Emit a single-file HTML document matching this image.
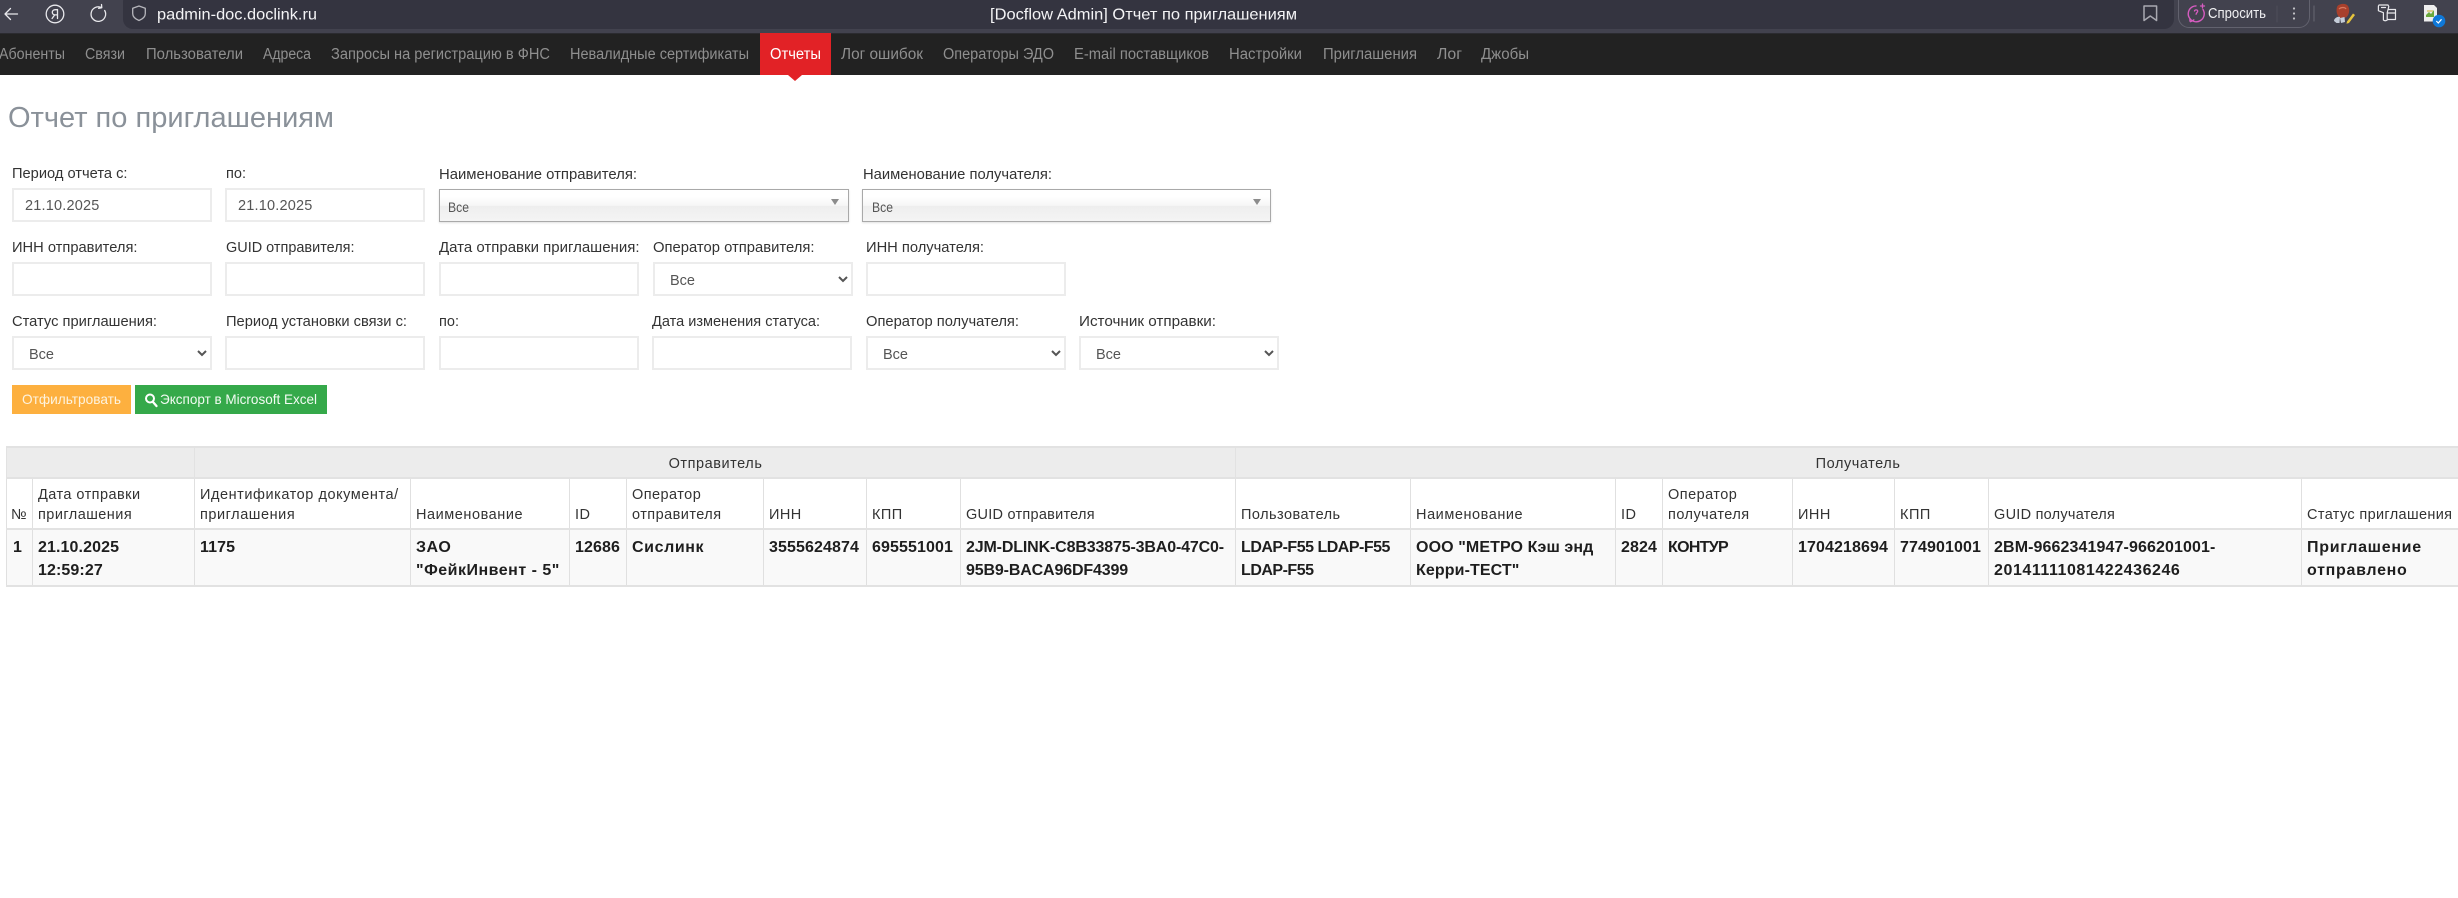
<!DOCTYPE html>
<html lang="ru">
<head>
<meta charset="utf-8">
<title>[Docflow Admin] Отчет по приглашениям</title>
<style>
html,body{margin:0;padding:0;width:2458px;height:898px;overflow:hidden;background:#fff}
body{position:relative;font-family:"Liberation Sans","DejaVu Sans",sans-serif;color:#333}
.abs{position:absolute}
#bar{left:0;top:0;width:2458px;height:33px;background:#42424e}
#omni{left:123px;top:-8px;width:2051px;height:37px;background:#343440;border-radius:10px}
#nav{left:0;top:33px;width:2458px;height:42px;background:#222;border-top:1px solid #2b2b30;box-sizing:border-box}
#active{left:760px;top:33px;width:71px;height:42px;background:#e22226}
#caret{left:788px;top:75px;width:0;height:0;border-left:7px solid transparent;border-right:7px solid transparent;border-top:6px solid #e22226}
#pill{left:2178px;top:-10px;width:132px;height:38px;box-sizing:border-box;border:1px solid #62626e;border-radius:11px}
input,select{position:absolute;box-sizing:border-box;width:200px;height:34px;background:#fff;border:2px solid #ececec;border-radius:0;margin:0;outline:0;font-family:"Liberation Sans",sans-serif;font-size:14.5px;color:#555;letter-spacing:.2px}
input{padding:1px 0 0 11px}
select{padding:3px 0 0 11px;letter-spacing:0}
.chosen{position:absolute;box-sizing:border-box;top:189px;height:33px;border:1.5px solid #a9a9a9;background:linear-gradient(#fff 20%,#f6f6f6 50%,#eee 52%,#f4f4f4 100%);box-shadow:0 1px 2px rgba(0,0,0,.12)}
.chosen:after{content:"";position:absolute;right:9px;top:9px;border-left:4px solid transparent;border-right:4px solid transparent;border-top:6px solid #8c8c8c}
.btn{position:absolute;top:385px;height:29px}
#tbl{left:6px;top:446px;width:2473px;border-collapse:collapse;table-layout:fixed;font-size:14.5px;color:#333}
#tbl th,#tbl td{border:1px solid #e0e0e0;padding:0 4px 0 5px;text-align:left;vertical-align:bottom;box-sizing:border-box;overflow:visible;white-space:nowrap}
#tbl .h1 th{height:31px;background:#ececec;border-width:2px 1px 2px 1px;border-color:#e2e2e2;text-align:center;vertical-align:middle;font-weight:400;letter-spacing:.55px;padding-top:3px}
#tbl .h2 th{height:51px;font-weight:400;line-height:20px;padding-bottom:3px;letter-spacing:.45px;border-bottom-width:2px;border-bottom-color:#e2e2e2}
#tbl td{height:57px;vertical-align:top;background:#f9f9f9;font-size:16px;font-weight:700;line-height:22.7px;padding-top:7px;color:#1e1e1e;letter-spacing:.1px;border-bottom:2px solid #e2e2e2}
svg{position:absolute;left:0;top:0;pointer-events:none}
</style>
</head>
<body>
<div class="abs" id="bar"></div>
<div class="abs" id="omni"></div>
<div class="abs" id="pill"></div>
<div class="abs" id="nav"></div>
<div class="abs" id="active"></div>
<div class="abs" id="caret"></div>

<input style="left:12px;top:188px" value="21.10.2025">
<input style="left:225px;top:188px" value="21.10.2025">
<div class="chosen" style="left:439px;width:410px"></div>
<div class="chosen" style="left:862px;width:409px"></div>

<input style="left:12px;top:262px">
<input style="left:225px;top:262px">
<input style="left:439px;top:262px">
<select style="left:653px;top:262px"><option>Все</option></select>
<input style="left:866px;top:262px">

<select style="left:12px;top:336px"><option>Все</option></select>
<input style="left:225px;top:336px">
<input style="left:439px;top:336px">
<input style="left:652px;top:336px">
<select style="left:866px;top:336px"><option>Все</option></select>
<select style="left:1079px;top:336px"><option>Все</option></select>

<div class="btn" style="left:12px;width:119px;background:#fdb03f"></div>
<div class="btn" style="left:135px;width:192px;background:#35a94a"></div>

<table class="abs" id="tbl">
<colgroup>
<col style="width:26px"><col style="width:162px"><col style="width:216px"><col style="width:159px"><col style="width:57px"><col style="width:137px"><col style="width:103px"><col style="width:94px"><col style="width:275px"><col style="width:175px"><col style="width:205px"><col style="width:47px"><col style="width:130px"><col style="width:102px"><col style="width:94px"><col style="width:313px"><col style="width:178px">
</colgroup>
<tr class="h1"><th colspan="2"></th><th colspan="7">Отправитель</th><th colspan="8">Получатель</th></tr>
<tr class="h2"><th style="padding-left:4px;padding-right:0;letter-spacing:-.6px">№</th><th>Дата отправки<br>приглашения</th><th style="padding-right:0;letter-spacing:.55px">Идентификатор документа/<br>приглашения</th><th style="letter-spacing:.55px">Наименование</th><th>ID</th><th>Оператор<br>отправителя</th><th>ИНН</th><th>КПП</th><th style="letter-spacing:.25px">GUID отправителя</th><th>Пользователь</th><th style="letter-spacing:.55px">Наименование</th><th>ID</th><th>Оператор<br>получателя</th><th>ИНН</th><th>КПП</th><th style="letter-spacing:.25px">GUID получателя</th><th style="letter-spacing:.35px">Статус приглашения</th></tr>
<tr><td style="padding-left:6px">1</td><td>21.10.2025<br>12:59:27</td><td>1175</td><td style="letter-spacing:.5px">ЗАО<br>"ФейкИнвент - 5"</td><td style="padding-right:0">12686</td><td style="letter-spacing:.6px">Сислинк</td><td style="padding-right:0">3555624874</td><td style="padding-right:0">695551001</td><td style="letter-spacing:-.15px">2JM-DLINK-C8B33875-3BA0-47C0-<br>95B9-BACA96DF4399</td><td style="letter-spacing:-.5px">LDAP-F55 LDAP-F55<br>LDAP-F55</td><td>ООО "МЕТРО Кэш энд<br>Керри-ТЕСТ"</td><td style="padding-right:0">2824</td><td style="letter-spacing:-.7px">КОНТУР</td><td style="padding-right:0">1704218694</td><td style="padding-right:0">774901001</td><td>2BM-9662341947-966201001-<br><span style="letter-spacing:.55px">20141111081422436246</span></td><td style="letter-spacing:.7px">Приглашение<br>отправлено</td></tr>
</table>

<svg width="2458" height="898" viewBox="0 0 2458 898" font-family="'Liberation Sans',sans-serif">
<!-- browser chrome icons -->
<g fill="none" stroke="#e8e8ec" stroke-width="1.3" stroke-linecap="round" stroke-linejoin="round">
<path d="M17.5 14H5M10.5 8.5L5 14l5.500 5.500"/>
<circle cx="55" cy="14" r="8.800"/>
<path d="M57.500 9.500v9M57.500 9.700h-2.200c-1.900 0-3 1.100-3 2.600 0 1.500 1.100 2.600 3 2.600h2.200M54.600 15l-2.500 3.500"/>
<path d="M104.700 10.500a7.300 7.300 0 1 1-3.200-3M101.500 4.500l.3 3.200-3.200.6"/>
<path stroke="#b6b6bc" d="M139 6l6.300 2.200v5.400c0 3.400-2.700 5.400-6.300 6.900-3.600-1.500-6.300-3.500-6.300-6.900V8.200z"/>
<path stroke="#a8a8b0" stroke-width="1.500" d="M2144 6h12.600v14.500l-6.300-4.500-6.300 4.500z"/>
<path stroke="#d65cc0" stroke-width="1.400" d="M2203 9.500a8 8 0 1 1-10.500-2.800c1-.5 2.200-.8 3.500-.8M2190 18.500c-.2 1.600-.2 2.700.4 3.200 1.300-.3 2.500-1 3.400-1.800"/>
<path stroke="#d65cc0" d="M2194.500 11c.3-1.300 2.800-1.600 3.200 0 .3 1.200-1.600 1.700-1.600 3.200M2202.500 4v4M2200.500 6h4"/>
<path stroke="#4e4e5a" stroke-width="1" d="M2277 6v16"/>
<path stroke="#62626c" stroke-width="1.200" d="M2314 6v15"/>
<path stroke="#e8e8ec" stroke-width="1.200" d="M2379 5h9l.8 1.500-1.600 6.200v7.300q-2 1.500-3.800 0v-7.300l-5-2V6zM2381.500 7.500h4M2388 9.500h7.500V19.500h-8M2387.500 13h8"/>
</g>
<circle cx="2294" cy="8.500" r="1.100" fill="#c4c4c8"/><circle cx="2294" cy="13.500" r="1.100" fill="#c4c4c8"/><circle cx="2294" cy="18.500" r="1.100" fill="#c4c4c8"/>
<path d="M2337 7c1-3.500 9-4.500 11-1 2 3 1.500 9-2 11.500l-6 .5c-3.500-3-4-7.500-3-11z" fill="#a8402c"/>
<path d="M2339 9c2-2 6-2 7 0" stroke="#d87a60" fill="none" stroke-width="1.200"/>
<path d="M2334 21c0-3 4-5 6-4l-.5 6-3 0zM2340 18l4.500-1 .5 5-4 1z" fill="#c4ccd8"/>
<path d="M2347 21.500l6-8 2 1.500-6 8-2.500.8z" fill="#e6c43c"/>
<path d="M2424 5h10l3 3v13.500h-13z" fill="#eeeeee"/>
<path d="M2426 15l3-3 2 2 3-4v7h-8z" fill="#6aa83c"/>
<path d="M2427 11h6" stroke="#d0b030" stroke-width="1"/>
<circle cx="2439" cy="21" r="6.300" fill="#0f78d8"/>
<path d="M2436.300 21l2 2 3.200-3.700" fill="none" stroke="#fff" stroke-width="1.200"/>
<circle cx="150" cy="398.500" r="4" fill="none" stroke="#fff" stroke-width="2"/>
<path d="M153 402l3.500 4" stroke="#fff" stroke-width="2.300" stroke-linecap="round"/>

<!-- browser text -->
<text x="157" y="19.500" font-size="16" fill="#f4f4f6" textLength="160" lengthAdjust="spacingAndGlyphs">padmin-doc.doclink.ru</text>
<text x="990" y="19.500" font-size="16" fill="#f4f4f6" textLength="307" lengthAdjust="spacingAndGlyphs">[Docflow Admin] Отчет по приглашениям</text>
<text x="2208" y="18" font-size="14.500" fill="#f0f0f2" textLength="58" lengthAdjust="spacingAndGlyphs">Спросить</text>

<!-- nav -->
<g font-size="15.500" fill="#8f8f8f">
<text x="-1" y="59" textLength="66" lengthAdjust="spacingAndGlyphs">Абоненты</text>
<text x="85" y="59" textLength="40" lengthAdjust="spacingAndGlyphs">Связи</text>
<text x="146" y="59" textLength="97" lengthAdjust="spacingAndGlyphs">Пользователи</text>
<text x="263" y="59" textLength="48" lengthAdjust="spacingAndGlyphs">Адреса</text>
<text x="331" y="59" textLength="219" lengthAdjust="spacingAndGlyphs">Запросы на регистрацию в ФНС</text>
<text x="570" y="59" textLength="179" lengthAdjust="spacingAndGlyphs">Невалидные сертификаты</text>
<text x="770" y="59" textLength="51" lengthAdjust="spacingAndGlyphs" fill="#fff">Отчеты</text>
<text x="841" y="59" textLength="82" lengthAdjust="spacingAndGlyphs">Лог ошибок</text>
<text x="943" y="59" textLength="111" lengthAdjust="spacingAndGlyphs">Операторы ЭДО</text>
<text x="1074" y="59" textLength="135" lengthAdjust="spacingAndGlyphs">E-mail поставщиков</text>
<text x="1229" y="59" textLength="73" lengthAdjust="spacingAndGlyphs">Настройки</text>
<text x="1323" y="59" textLength="94" lengthAdjust="spacingAndGlyphs">Приглашения</text>
<text x="1437" y="59" textLength="25" lengthAdjust="spacingAndGlyphs">Лог</text>
<text x="1481" y="59" textLength="48" lengthAdjust="spacingAndGlyphs">Джобы</text>
</g>

<!-- title -->
<text x="8" y="127" font-size="29" fill="#8a9199" textLength="326" lengthAdjust="spacingAndGlyphs">Отчет по приглашениям</text>

<!-- labels -->
<g font-size="15" fill="#333">
<text x="12" y="178" textLength="115.500" lengthAdjust="spacingAndGlyphs">Период отчета с:</text>
<text x="226" y="178" textLength="20" lengthAdjust="spacingAndGlyphs">по:</text>
<text x="439" y="179" textLength="198" lengthAdjust="spacingAndGlyphs">Наименование отправителя:</text>
<text x="863" y="179" textLength="189" lengthAdjust="spacingAndGlyphs">Наименование получателя:</text>
<text x="12" y="252" textLength="125.500" lengthAdjust="spacingAndGlyphs">ИНН отправителя:</text>
<text x="226" y="252" textLength="128.500" lengthAdjust="spacingAndGlyphs">GUID отправителя:</text>
<text x="439" y="252" textLength="200.500" lengthAdjust="spacingAndGlyphs">Дата отправки приглашения:</text>
<text x="653" y="252" textLength="161.500" lengthAdjust="spacingAndGlyphs">Оператор отправителя:</text>
<text x="866" y="252" textLength="118" lengthAdjust="spacingAndGlyphs">ИНН получателя:</text>
<text x="12" y="326" textLength="145" lengthAdjust="spacingAndGlyphs">Статус приглашения:</text>
<text x="226" y="326" textLength="181" lengthAdjust="spacingAndGlyphs">Период установки связи с:</text>
<text x="439" y="326" textLength="20" lengthAdjust="spacingAndGlyphs">по:</text>
<text x="652" y="326" textLength="168" lengthAdjust="spacingAndGlyphs">Дата изменения статуса:</text>
<text x="866" y="326" textLength="153" lengthAdjust="spacingAndGlyphs">Оператор получателя:</text>
<text x="1079" y="326" textLength="137" lengthAdjust="spacingAndGlyphs">Источник отправки:</text>
</g>
<g font-size="14" fill="#555">
<text x="448" y="212" textLength="21" lengthAdjust="spacingAndGlyphs">Все</text>
<text x="872" y="212" textLength="21" lengthAdjust="spacingAndGlyphs">Все</text>
</g>
<g font-size="14" fill="#fff">
<text x="22" y="404" textLength="99" lengthAdjust="spacingAndGlyphs" fill="#fdf3df">Отфильтровать</text>
<text x="160" y="404" textLength="157" lengthAdjust="spacingAndGlyphs" fill="#f2fbf3">Экспорт в Microsoft Excel</text>
</g>
</svg>
</body>
</html>
